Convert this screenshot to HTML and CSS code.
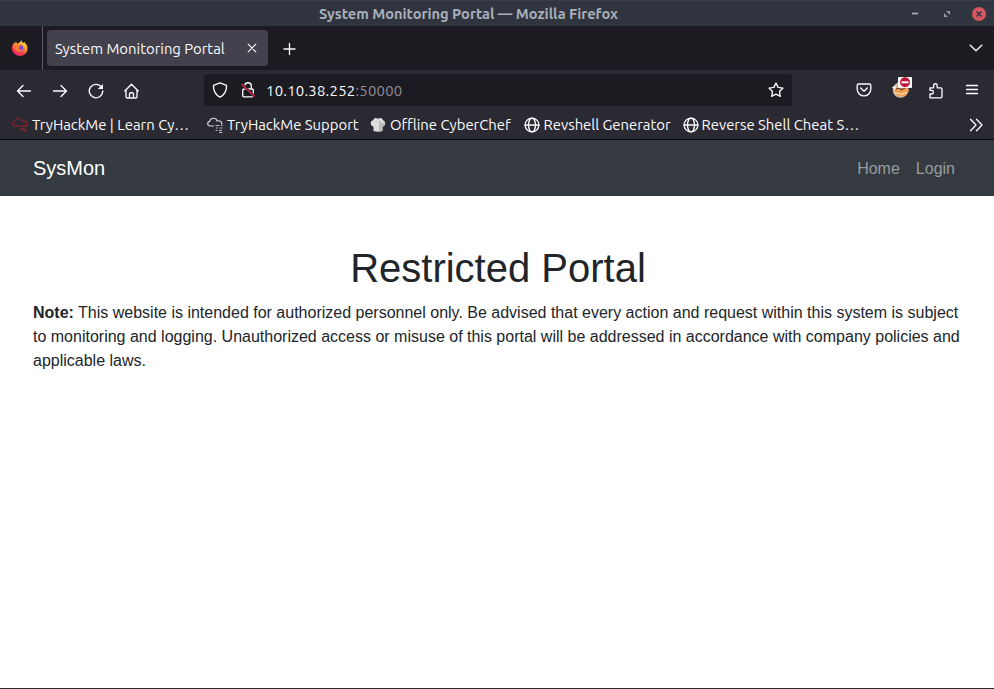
FILE: index.html
```html
<!DOCTYPE html>
<html lang="en">
<head>
<meta charset="utf-8">
<title>System Monitoring Portal</title>
<link rel="stylesheet" href="styles.css">
</head>
<body>
<div class="window">
  <header class="titlebar">
    <span class="window-title">System Monitoring Portal — Mozilla Firefox</span>
    <div class="window-controls">
      <svg width="8" height="14" viewBox="0 0 8 14"><path d="M1 6.500h6" stroke="#a5aab5" stroke-width="1.8"/></svg>
      <svg width="8" height="14" viewBox="0 0 8 14"><path d="M3 4h4v4zM1 6v4h4z" fill="#8f96a2"/></svg>
      <svg width="14" height="14" viewBox="0 0 14 14"><circle cx="7" cy="7" r="7" fill="#d5565f"/><path d="M4.5 4.5l5 5m0-5l-5 5" stroke="#363b46" stroke-width="1.7"/></svg>
    </div>
  </header>
  <div class="tabs">
    <div class="firefox-view">
      <svg width="16" height="16" viewBox="0 0 16 16">
        <defs><linearGradient id="fire" x1=".8" y1="0" x2=".3" y2="1"><stop offset="0" stop-color="#fff14a"/><stop offset=".4" stop-color="#ff9a28"/><stop offset=".75" stop-color="#ff3c50"/><stop offset="1" stop-color="#e32473"/></linearGradient></defs>
        <path d="M9.700 0c-.2 1 .2 2 1.200 3l1.800-1.100c.1 1 1.200 1.700 2 3.100C17.200 10 14 16 8 16 3.500 16 0 12.500 0 8.300 0 6 .8 4.200 2.200 2.200l.6 1.700 1.100-2.400 1.300 2.200C7 3.600 8 2 9.700 0z" fill="url(#fire)"/>
        <circle cx="8" cy="8.300" r="3.300" fill="#7547d8"/><path d="M3.500 5c2-.8 3.300-.2 4.200.8L9 6.100C8.500 7 7.300 6.900 6.500 7.700c0 2 2.600 2.500 4 .8-.2 4-6.500 4.300-7.500.2z" fill="#ff7a2b"/>
      </svg>
    </div>
    <div class="tab"><span>System Monitoring Portal</span>
      <svg width="10" height="10" viewBox="0 0 10 10"><path d="M1.200 1.200l7.600 7.600m0-7.600L1.200 8.800" class="line thin"/></svg>
    </div>
    <svg class="new-tab" width="14" height="14" viewBox="0 0 14 14"><path d="M6.500 1.500v11M1 7h11" class="line"/></svg>
    <svg class="all-tabs" width="14" height="8" viewBox="0 0 14 8"><path d="M1.200 1.200L7 6.700l5.800-5.500" class="line"/></svg>
  </div>
  <div class="toolbar">
    <div class="nav-buttons">
      <svg width="16" height="16" viewBox="0 0 16 16"><path d="M14.500 8H1.600M7 2.500L1.500 8 7 13.500" class="line"/></svg>
      <svg width="16" height="16" viewBox="0 0 16 16"><path d="M1.500 8h12.900M9 2.500L14.500 8 9 13.500" class="line"/></svg>
      <svg width="16" height="16" viewBox="0 0 16 16"><path d="M13.600 4.400A6.700 6.700 0 1 0 14.700 8" class="line"/><path d="M15 1v5H9.800z" fill="#fbfbfe"/></svg>
      <svg width="16" height="16" viewBox="0 0 16 16"><path d="M.8 8l6.700-6.800L14.200 8M2 7v6.500Q2 15 3.500 15h8q1.500 0 1.500-1.500V7M5.500 15v-4q0-1.300 1.300-1.300h1.400q1.300 0 1.300 1.300v4" class="line"/></svg>
    </div>
    <div class="urlbar">
      <svg class="shield" width="16" height="16" viewBox="0 0 16 16"><path d="M8 .9l6.500 2.400c.5 5-2.200 10-6.500 11.900C3.700 13.300 1 8.300 1.500 3.300z" class="line"/></svg>
      <svg class="lock" width="16" height="16" viewBox="0 0 16 16"><path d="M4.700 7V4a3.300 3.300 0 0 1 6.600 0v3M4 7h8q1.300 0 1.300 1.300v5.200q0 1.300-1.300 1.300H4q-1.300 0-1.300-1.300V8.300Q2.700 7 4 7z" class="line"/><path d="M2 2.500l12.700 12" stroke="#1c1b22" stroke-width="2.600"/><path d="M1.400 1.900l13.300 12.600" stroke="#e22850" stroke-width="1.400"/></svg>
      <span class="address">10.10.38.252<span class="port">:50000</span></span>
      <svg class="star" width="16" height="16" viewBox="0 0 16 16"><path d="M8 1l2.100 4.400 4.900.7-3.500 3.400.8 4.900L8 12.100l-4.300 2.300.8-4.900L1 6.100l4.900-.7z" class="line"/></svg>
    </div>
    <div class="extensions">
      <svg width="16" height="16" viewBox="0 0 16 16"><path d="M2.500 2h11q1.300 0 1.300 1.300v3.800a6.800 6.800 0 0 1-13.600 0V3.300Q1.200 2 2.500 2zM4.700 6L8 9.200 11.300 6" class="line"/></svg>
      <svg class="proxy" width="22" height="24" viewBox="0 0 22 24"><circle cx="10.500" cy="14" r="7.800" fill="#cdbbb0"/><path d="M2 11l5 .5 2-3.500 8 2 2 4c-1 5-5 7-9 6.500C6 20 4 16 4 13z" fill="#efa052"/><path d="M6 13l4-1 1 2 4-2" fill="none" stroke="#704331" stroke-width="1.200"/><path d="M4 16c3 2 9 3 13 0" fill="none" stroke="#f8d3a6" stroke-width="1.500"/><path d="M2 11l4-1-1 4z" fill="#fff"/><rect x="8" y="1" width="14" height="11" rx="1" fill="#fff"/><circle cx="15" cy="6.300" r="5" fill="#bf1636"/><path d="M11.500 6.300h7" stroke="#fff" stroke-width="2"/></svg>
      <svg class="puzzle" width="16" height="16" viewBox="0 0 16 16"><path d="M2 14.800V11h1.600a1.800 1.800 0 1 0 0-3.600H2V4.800h3.600V2.500a1.800 1.800 0 0 1 3.600 0v2.300h3.500Q14 4.800 14 6.100v7.400q0 1.300-1.300 1.300z" class="line"/></svg>
      <svg width="16" height="16" viewBox="0 0 16 16"><path d="M2.500 3.500h11M2.500 7.500h11M2.500 11.500h11" class="line"/></svg>
    </div>
  </div>
  <div class="bookmarks">
    <a class="bookmark learn"><svg width="16" height="16" viewBox="0 0 16 16"><path d="M7 9H3.300C0 8.800-.1 4.700 2.700 4.400 3.500.3 9 .3 10.200 4c3-1 5.300 1.700 4.300 4.500M8 9h7.500M8 12h5m-2 2h4" fill="none" stroke="#a9202b"/></svg><span>TryHackMe | Learn Cy…</span></a>
    <a class="bookmark support"><svg width="16" height="16" viewBox="0 0 16 16"><path d="M7 9H3.300C0 8.800-.1 4.700 2.700 4.400 3.500.3 9 .3 10.200 4c3-1 5 1.200 4.500 3.500" fill="none" stroke="#d6d6da" stroke-width="1.200"/><path d="M8.500 8.500h4m1.500 0h1.500M9 11h2m1.500 0h3M8.500 13.500h2m1.500 0h3M12 15.500h3.500" stroke="#b8b8bd" stroke-width="1.200"/></svg><span>TryHackMe Support</span></a>
    <a class="bookmark chef"><svg width="16" height="16" viewBox="0 0 16 16"><path d="M3.500 14V9.500C0 9-.2 3.800 3 3.200 4.200.5 7 .7 8 2c2-1.800 4.500-.7 5 1.200 3.300.8 2.800 5.900-.5 6.300V14q-4.500 1.500-9 0z" fill="#dedede"/><path d="M9 3v11.500l3.500-.5V9.500c2-.2 3-2 2.500-4L12 6z" fill="#bcbcbc"/></svg><span>Offline CyberChef</span></a>
    <a class="bookmark shell"><svg width="16" height="16" viewBox="0 0 16 16"><g class="line"><circle cx="8" cy="8" r="6.900"/><ellipse cx="8" cy="8" rx="3.500" ry="6.900"/><path d="M1 8h14"/></g></svg><span>Revshell Generator</span></a>
    <a class="bookmark cheat"><svg width="16" height="16" viewBox="0 0 16 16"><g class="line"><circle cx="8" cy="8" r="6.900"/><ellipse cx="8" cy="8" rx="3.500" ry="6.900"/><path d="M1 8h14"/></g></svg><span>Reverse Shell Cheat S…</span></a>
    <svg class="more" width="14" height="14" viewBox="0 0 14 14"><path d="M1.500 1.200L7 7l-5.500 5.800M7.500 1.200L13 7l-5.500 5.800" class="line"/></svg>
  </div>
  <div class="page">
    <nav class="navbar"><a class="brand">SysMon</a><a class="nav-link">Home</a><a class="nav-link">Login</a></nav>
    <main>
      <h1>Restricted Portal</h1>
      <p><strong>Note:</strong> This website is intended for authorized personnel only. Be advised that every action and request within this system is subject to monitoring and logging. Unauthorized access or misuse of this portal will be addressed in accordance with company policies and applicable laws.</p>
    </main>
  </div>
</div>
</body>
</html>
```
FILE: styles.css
```css
* { box-sizing: border-box; }
body { margin: 0; }
svg { display: block; flex: none; }
.line { fill: none; stroke: #fbfbfe; stroke-width: 1.35; stroke-linecap: round; stroke-linejoin: round; }
.thin { stroke-width: 1.1; }
.window { display: flex; flex-direction: column; height: 689px; overflow: hidden; border-bottom: 1px solid #2b2a33; background: #fff; font: 14.87px/20px Ubuntu, "Noto Sans", sans-serif; color: #fbfbfe; white-space: nowrap; }
.titlebar { display: flex; align-items: center; justify-content: space-between; height: 26px; flex: none; padding: 0 8px 0 319px; background: #2f343f; border-top: 1px solid #383d49; }
.window-title { font-weight: 600; color: #a9afba; font-size: 14.6px; }
.window-controls { display: flex; align-items: center; gap: 24px; }
.window-controls svg:last-child { margin-left: -3px; }
.tabs { display: flex; align-items: center; height: 44px; flex: none; padding-right: 11px; background: #1c1b22; }
.firefox-view { display: flex; align-items: center; height: 44px; width: 43px; padding-left: 12px; border-right: 1px solid #5b5a62; }
.tab { display: flex; align-items: center; justify-content: space-between; width: 221px; height: 36px; margin-left: 4px; padding: 0 11px 0 8px; border-radius: 4px; background: #42414d; }
.tab span { padding-top: 1px; }
.new-tab { margin: 2px 0 0 15px; }
.all-tabs { margin-left: auto; }
.toolbar { display: flex; align-items: center; height: 40px; flex: none; padding: 0 14px 0 16px; background: #2b2a33; }
.nav-buttons { display: flex; gap: 20px; width: 188px; padding-top: 1px; }
.urlbar { display: flex; align-items: center; width: 588px; height: 32px; padding: 0 8px; border-radius: 4px; background: #1c1b22; }
.lock { margin-left: 12px; }
.address { margin-left: 10px; padding-top: 1px; letter-spacing: .25px; }
.port { color: #919098; }
.star { margin-left: auto; }
.extensions { display: flex; align-items: center; gap: 20px; margin-left: auto; }
.proxy { margin: -4px -4px 0 -2px; }
.puzzle { margin-top: 1px; }
.bookmarks { display: flex; align-items: center; height: 30px; flex: none; padding: 1px 11px 0 12px; background: #2b2a33; border-bottom: 1px solid #0c0c0d; }
.bookmark { display: flex; align-items: center; gap: 4px; }
.learn { width: 195px; }
.support { width: 163px; }
.chef { width: 153.500px; }
.shell { width: 159px; }
.cheat { gap: 3px; }
.more { margin-left: auto; }
.page { flex: 1; font: 16px/24px "Liberation Sans", Arial, sans-serif; color: #212529; white-space: normal; }
.navbar { display: flex; align-items: center; gap: 16px; height: 56px; padding: 0 39px 0 33px; background: #343a40; }
.brand { margin-right: auto; font-size: 20px; line-height: 30px; color: #fff; }
.nav-link { padding-top: 1px; line-height: 25px; color: #999c9f; }
main { padding: 48px 31px 0 33px; }
h1 { margin: 0 0 9px; font-size: 40px; line-height: 48px; font-weight: 500; text-align: center; }
p { margin: 0; }
```
